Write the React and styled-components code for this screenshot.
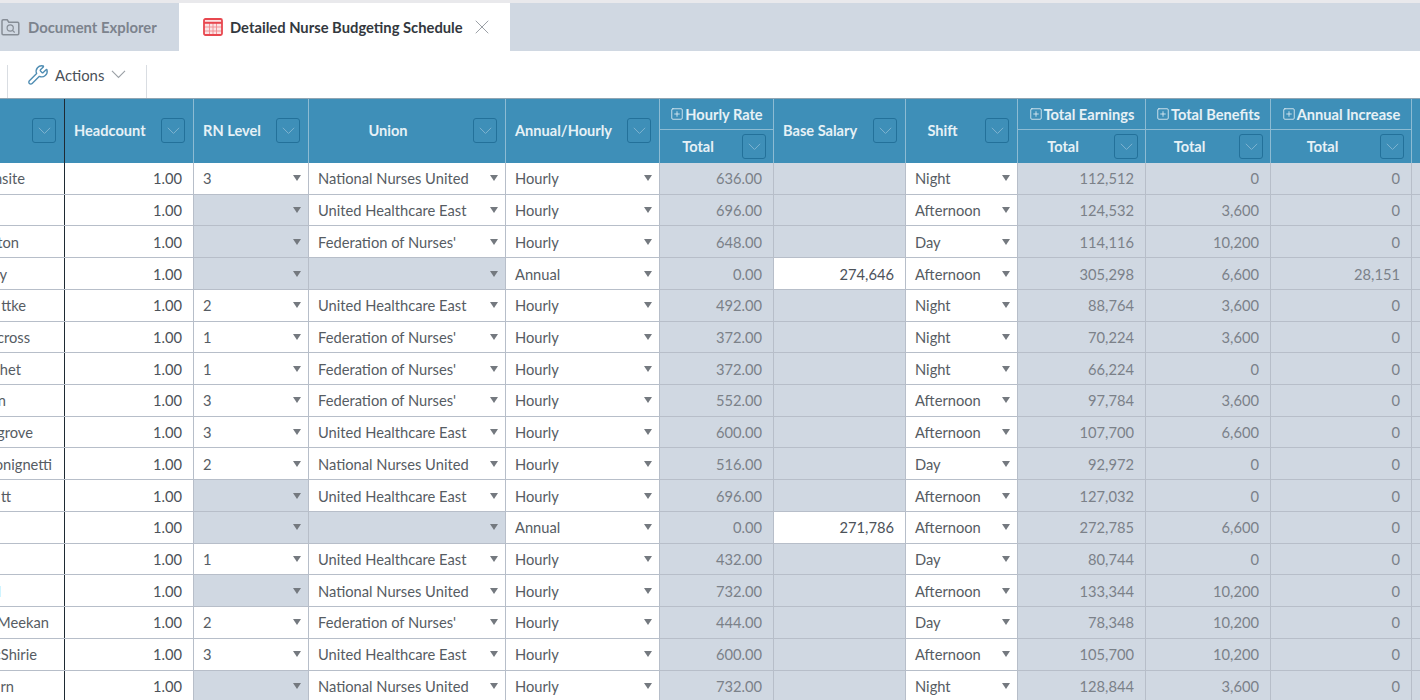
import React from 'react';
import styled, { createGlobalStyle } from 'styled-components';
import { SquarePlus, Wrench, X } from 'lucide-react';

const COLUMNS = '65px 129px 115px 197px 154px 114px 132px 112px 128px 125px 141px 60px';
const BORDER = '#b7bec9';
const DISABLED = '#d0d8e2';
const HEADER = '#3e8fb8';

const GlobalStyle = createGlobalStyle`
  html, body {
    margin: 0;
    height: 100%;
    overflow: hidden;
    background: #fff;
    font-family: Lato, "Open Sans", sans-serif;
  }
`;

const Page = styled.div`
  width: 1420px;
  height: 700px;
  overflow: hidden;
  padding-top: 3px;
  box-sizing: border-box;
  background: #e9e9ec;
`;

const TabBar = styled.div`
  display: flex;
  height: 48px;
  background: ${DISABLED};
`;

const InactiveTab = styled.div`
  display: flex;
  align-items: center;
  gap: 8px;
  width: 178px;
  padding-left: 1px;
  box-sizing: border-box;
  color: #7c838d;
  font-size: 14.85px;
  font-weight: 700;
`;

const ActiveTab = styled.div`
  display: flex;
  align-items: center;
  width: 331px;
  margin-left: 1px;
  padding-left: 24px;
  box-sizing: border-box;
  background: #fff;
  color: #33383e;
  font-size: 14.75px;
  font-weight: 700;
`;

const TabTitle = styled.span`
  margin: 0 7px 0 7px;
  white-space: nowrap;
`;

const Toolbar = styled.div`
  display: flex;
  align-items: flex-end;
  height: 47px;
  padding-left: 7px;
  background: #fff;
`;

const ActionsButton = styled.div`
  display: flex;
  align-items: center;
  width: 140px;
  height: 33px;
  padding: 0 0 14px 19px;
  box-sizing: border-box;
  border-left: 1px solid #d9dde2;
  border-right: 1px solid #d9dde2;
  color: #4a5159;
  font-size: 14.9px;
`;

const ActionsLabel = styled.span`
  margin: 0 7px 0 6px;
`;

const Table = styled.div`
  border-top: 1px solid #8fa5b3;
  background: #fff;
`;

const HeaderRow = styled.div`
  display: grid;
  grid-template-columns: ${COLUMNS};
  height: 64px;
  background: ${HEADER};
  color: #e6f1f6;
  font-size: 14.6px;
  font-weight: 700;
`;

const HeaderCell = styled.div`
  display: flex;
  align-items: center;
  padding: 0 8px 1px ${p => (p.$center ? '0' : '9px')};
  box-sizing: border-box;
  border-right: 1px solid #8dbbd3;
  white-space: nowrap;

  &:first-child {
    border-right: 1px solid #1e2a33;
  }
`;

const CenteredLabel = styled.span`
  flex: 1;
  padding-right: 6px;
  text-align: center;
`;

const FilterButton = styled.span`
  display: flex;
  align-items: center;
  justify-content: center;
  flex: none;
  width: 22px;
  height: 23px;
  margin-left: auto;
  border: 1px solid #23719a;
  border-radius: 3px;
  color: #80b5d1;
`;

const GroupCell = styled.div`
  display: grid;
  grid-template-rows: 31px 33px;
  box-sizing: border-box;
  border-right: 1px solid #8dbbd3;
  white-space: nowrap;
`;

const GroupTitle = styled.div`
  display: flex;
  align-items: center;
  justify-content: center;
  gap: 1px;
  border-bottom: 1px solid #8dbbd3;
`;

const GroupTotal = styled.div`
  display: flex;
  align-items: center;
  padding: 0 7px 0 0;
`;

const Row = styled.div`
  display: grid;
  grid-template-columns: ${COLUMNS};
  height: 31.72px;
  box-sizing: border-box;
  border-bottom: 1px solid ${BORDER};
  color: #565c63;
  font-size: 14.7px;
`;

const NameCell = styled.div`
  display: flex;
  align-items: center;
  justify-content: flex-end;
  overflow: hidden;
  padding-right: ${p => p.$inset}px;
  box-sizing: border-box;
  border-right: 1px solid #1e2a33;
  white-space: nowrap;
`;

const NumberCell = styled.div`
  display: flex;
  align-items: center;
  justify-content: flex-end;
  padding-right: 11px;
  box-sizing: border-box;
  border-right: 1px solid ${BORDER};
  background: ${p => (p.$disabled ? DISABLED : '#fff')};
  color: ${p => (p.$disabled ? '#7b8189' : '#4c5259')};
`;

const SelectCell = styled.div`
  display: flex;
  align-items: center;
  padding: 0 7px 0 9px;
  box-sizing: border-box;
  border-right: 1px solid ${BORDER};
  background: ${p => (p.$disabled ? DISABLED : '#fff')};
  white-space: nowrap;
`;

const Caret = styled.span`
  margin-left: auto;
  width: 0;
  height: 0;
  border-left: 4.5px solid transparent;
  border-right: 4.5px solid transparent;
  border-top: 6px solid #74797f;
`;

const EdgeCell = styled.div`
  background: ${DISABLED};
`;

const NNU = 'National Nurses United';
const UHE = 'United Healthcare East';
const FED = "Federation of Nurses'";

const ROWS = [
  ['nsite', 39, '3', NNU, 'Hourly', '636.00', '', 'Night', '112,512', '0', '0'],
  ['', 0, '', UHE, 'Hourly', '696.00', '', 'Afternoon', '124,532', '3,600', '0'],
  ['ton', 45, '', FED, 'Hourly', '648.00', '', 'Day', '114,116', '10,200', '0'],
  ['y', 57, '', '', 'Annual', '0.00', '274,646', 'Afternoon', '305,298', '6,600', '28,151'],
  ['ttke', 38, '2', UHE, 'Hourly', '492.00', '', 'Night', '88,764', '3,600', '0'],
  ['cross', 34, '1', FED, 'Hourly', '372.00', '', 'Night', '70,224', '3,600', '0'],
  ['het', 43, '1', FED, 'Hourly', '372.00', '', 'Night', '66,224', '0', '0'],
  ['n', 58, '3', FED, 'Hourly', '552.00', '', 'Afternoon', '97,784', '3,600', '0'],
  ['grove', 31, '3', UHE, 'Hourly', '600.00', '', 'Afternoon', '107,700', '6,600', '0'],
  ['onignetti', 12, '2', NNU, 'Hourly', '516.00', '', 'Day', '92,972', '0', '0'],
  ['tt', 53, '', UHE, 'Hourly', '696.00', '', 'Afternoon', '127,032', '0', '0'],
  ['', 0, '', '', 'Annual', '0.00', '271,786', 'Afternoon', '272,785', '6,600', '0'],
  ['', 0, '1', UHE, 'Hourly', '432.00', '', 'Day', '80,744', '0', '0'],
  ['l', 63, '', NNU, 'Hourly', '732.00', '', 'Afternoon', '133,344', '10,200', '0'],
  ['Meekan', 15, '2', FED, 'Hourly', '444.00', '', 'Day', '78,348', '10,200', '0'],
  ['cShirie', 27, '3', UHE, 'Hourly', '600.00', '', 'Afternoon', '105,700', '10,200', '0'],
  ['rn', 50, '', NNU, 'Hourly', '732.00', '', 'Night', '128,844', '3,600', '0'],
];

const Chevron = ({ width, color = 'currentColor' }) => (
  <svg width={width} height={width * 0.56} viewBox="0 0 16 9" fill="none" stroke={color} strokeWidth="1.2">
    <path d="M1 1l7 7 7-7" />
  </svg>
);

const Filter = () => (
  <FilterButton>
    <Chevron width={13} />
  </FilterButton>
);

const Group = ({ title }) => (
  <GroupCell>
    <GroupTitle>
      <SquarePlus size={14} strokeWidth={1.4} />
      {title}
    </GroupTitle>
    <GroupTotal>
      <CenteredLabel>Total</CenteredLabel>
      <Filter />
    </GroupTotal>
  </GroupCell>
);

const ExplorerIcon = () => (
  <svg width="19" height="18" viewBox="0 0 19 18" fill="none" stroke="#868d96" strokeWidth="1.5">
    <path d="M1 15.5V3a1.2 1.2 0 0 1 1.2-1.2h4l1.6 2.4h8.8A1.2 1.2 0 0 1 17.8 5.4v10.1a1.2 1.2 0 0 1-1.2 1.2H2.2A1.2 1.2 0 0 1 1 15.5z" />
    <circle cx="9.2" cy="10" r="3.1" strokeWidth="1.2" />
    <path d="M11.5 12.3l2.2 2.2" strokeWidth="1.2" />
  </svg>
);

const ScheduleIcon = () => (
  <svg width="20" height="18" viewBox="0 0 20 18" fill="#fbe3e4" stroke="#e8474f">
    <rect x="1" y="1" width="18" height="16" rx="1.5" strokeWidth="1.8" />
    <path d="M1 4.8h18" strokeWidth="2" />
    <path d="M1 9h18M1 13h18M6.5 5v12M10 5v12M13.5 5v12" strokeWidth="0.9" opacity="0.55" />
  </svg>
);

const Select = ({ value }) => (
  <SelectCell $disabled={!value}>
    {value}
    <Caret />
  </SelectCell>
);

export default function App() {
  return (
    <Page>
      <GlobalStyle />
      <TabBar>
        <InactiveTab>
          <ExplorerIcon />
          Document Explorer
        </InactiveTab>
        <ActiveTab>
          <ScheduleIcon />
          <TabTitle>Detailed Nurse Budgeting Schedule</TabTitle>
          <X size={24} strokeWidth={1} color="#9ba0a6" />
        </ActiveTab>
      </TabBar>
      <Toolbar>
        <ActionsButton>
          <Wrench size={22} strokeWidth={1.5} color="#4f8db3" />
          <ActionsLabel>Actions</ActionsLabel>
          <Chevron width={15} color="#9ba0a6" />
        </ActionsButton>
      </Toolbar>
      <Table>
        <HeaderRow>
          <HeaderCell>
            <Filter />
          </HeaderCell>
          <HeaderCell>
            Headcount
            <Filter />
          </HeaderCell>
          <HeaderCell>
            RN Level
            <Filter />
          </HeaderCell>
          <HeaderCell $center>
            <CenteredLabel>Union</CenteredLabel>
            <Filter />
          </HeaderCell>
          <HeaderCell>
            Annual/Hourly
            <Filter />
          </HeaderCell>
          <Group title="Hourly Rate" />
          <HeaderCell>
            Base Salary
            <Filter />
          </HeaderCell>
          <HeaderCell $center>
            <CenteredLabel>Shift</CenteredLabel>
            <Filter />
          </HeaderCell>
          <Group title="Total Earnings" />
          <Group title="Total Benefits" />
          <Group title="Annual Increase" />
          <HeaderCell />
        </HeaderRow>
        {ROWS.map((row, i) => (
          <Row key={i}>
            <NameCell $inset={row[1]}>{row[0]}</NameCell>
            <NumberCell>1.00</NumberCell>
            <Select value={row[2]} />
            <Select value={row[3]} />
            <Select value={row[4]} />
            <NumberCell $disabled>{row[5]}</NumberCell>
            <NumberCell $disabled={!row[6]}>{row[6]}</NumberCell>
            <Select value={row[7]} />
            <NumberCell $disabled>{row[8]}</NumberCell>
            <NumberCell $disabled>{row[9]}</NumberCell>
            <NumberCell $disabled>{row[10]}</NumberCell>
            <EdgeCell />
          </Row>
        ))}
      </Table>
    </Page>
  );
}
